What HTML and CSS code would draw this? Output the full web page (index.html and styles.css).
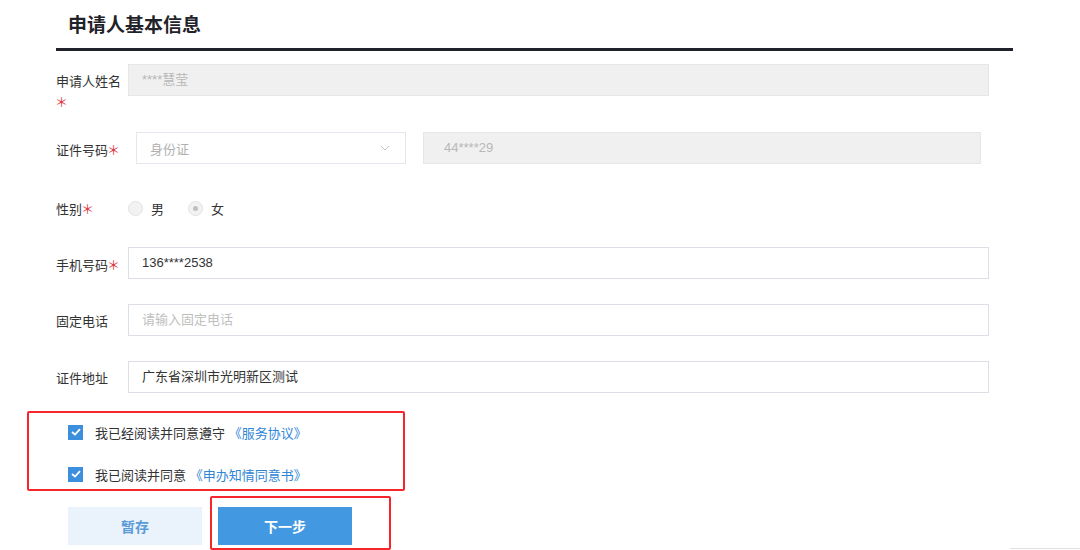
FILE: index.html
```html
<!DOCTYPE html>
<html lang="zh-CN">
<head>
  <meta charset="UTF-8">
  <title>申请人基本信息</title>
  <link rel="stylesheet" href="styles.css">
</head>
<body>

  <div class="page">
    <!-- 标题 -->
    <h2 class="title">申请人基本信息</h2>

    <!-- 表单 -->
    <div class="form">
      <div class="row row--tall">
        <label class="label">申请人姓名<span class="star">＊</span></label>
        <div class="control">
          <div class="input input--disabled">****慧莹</div>
        </div>
      </div>

      <div class="row">
        <label class="label">证件号码<span class="star">＊</span></label>
        <div class="control control--split">
          <div class="select">
            <span>身份证</span>
            <svg class="arrow" width="10" height="6" viewBox="0 0 10 6"><path d="M1 1 L5 5 L9 1" fill="none" stroke="#c0c4cc" stroke-width="1"/></svg>
          </div>
          <div class="input input--disabled input--num">44****29</div>
        </div>
      </div>

      <div class="row row--radio">
        <label class="label">性别<span class="star">＊</span></label>
        <div class="control control--radios">
          <span class="radio"></span><span class="radio-text">男</span>
          <span class="radio radio--on"></span><span class="radio-text">女</span>
        </div>
      </div>

      <div class="row">
        <label class="label">手机号码<span class="star">＊</span></label>
        <div class="control">
          <div class="input">136****2538</div>
        </div>
      </div>

      <div class="row">
        <label class="label">固定电话</label>
        <div class="control">
          <div class="input input--placeholder">请输入固定电话</div>
        </div>
      </div>

      <div class="row">
        <label class="label">证件地址</label>
        <div class="control">
          <div class="input">广东省深圳市光明新区测试</div>
        </div>
      </div>
    </div>

    <!-- 协议 -->
    <div class="agree">
      <div class="check-row">
        <span class="checkbox"><svg width="10" height="8" viewBox="0 0 10 8"><path d="M1 4 L4 6.5 L9 1.2" fill="none" stroke="#fff" stroke-width="1.8"/></svg></span>
        <span>我已经阅读并同意遵守 <a class="link">《服务协议》</a></span>
      </div>
      <div class="check-row">
        <span class="checkbox"><svg width="10" height="8" viewBox="0 0 10 8"><path d="M1 4 L4 6.5 L9 1.2" fill="none" stroke="#fff" stroke-width="1.8"/></svg></span>
        <span>我已阅读并同意 <a class="link">《申办知情同意书》</a></span>
      </div>
    </div>

    <!-- 按钮 -->
    <div class="buttons">
      <button class="btn btn--light">暂存</button>
      <div class="btn-mark">
        <button class="btn btn--primary">下一步</button>
      </div>
    </div>
  </div>

  <div class="corner-line"></div>

</body>
</html>
```

FILE: styles.css
```css
html, body {
  margin: 0;
  padding: 0;
  background: #fff;
  font-family: "Liberation Sans", "Noto Sans CJK SC", sans-serif;
  color: #333;
  font-size: 13px;
}

.page {
  width: 957px;
  margin-left: 56px;
}

.title {
  margin: 0;
  padding: 13px 0 0 12px;
  height: 35px;
  font-size: 19px;
  line-height: 26px;
  font-weight: bold;
  color: #1f2329;
  border-bottom: 3px solid #1f2329;
}

.form {
  padding-top: 13px;
  width: 933px;
}

.row {
  display: flex;
  align-items: flex-start;
  margin-bottom: 25px;
}

.row:last-child {
  margin-bottom: 0;
}

.row--tall {
  margin-bottom: 19px;
}

.row--radio {
  height: 40px;
  margin-bottom: 18px;
}

.label {
  width: 72px;
  flex-shrink: 0;
  padding-top: 8px;
  line-height: 20px;
  color: #333;
}

.row--radio .label {
  padding-top: 10px;
}

.star {
  font-family: "Noto Sans CJK SC", sans-serif;
  color: #d9363e;
  margin-left: -1px;
}

.control {
  flex: 1;
}

.control--split {
  display: flex;
  gap: 17px;
  padding: 0 8px;
}

.input {
  box-sizing: border-box;
  height: 32px;
  line-height: 30px;
  border: 1px solid #dcdfe6;
  padding: 0 13px;
  color: #333;
  background: #fff;
}

.input--disabled {
  background: #f0f0f0;
  border-color: #e6e6e6;
  color: #b8b8b8;
}

.input--num {
  flex: 1;
  padding-left: 20px;
}

.input--placeholder {
  color: #c0c0c0;
}

.select {
  box-sizing: border-box;
  width: 270px;
  height: 32px;
  border: 1px solid #e4e7ed;
  display: flex;
  align-items: center;
  justify-content: space-between;
  padding: 0 15px 0 13px;
  color: #b0b0b0;
}

.control--radios {
  display: flex;
  align-items: center;
  height: 32px;
  padding-top: 3px;
}

.radio {
  box-sizing: border-box;
  width: 15px;
  height: 15px;
  border-radius: 50%;
  border: 1px solid #e2e2e2;
  background: #f2f2f2;
  position: relative;
}

.radio--on::after {
  content: "";
  position: absolute;
  left: 4px;
  top: 4px;
  width: 5px;
  height: 5px;
  border-radius: 50%;
  background: #c0c0c0;
}

.radio-text {
  margin: 0 24px 0 8px;
  color: #333;
}

/* 协议勾选 */
.agree {
  box-sizing: border-box;
  width: 378px;
  height: 80px;
  margin: 18px 0 0 -29px;
  border: 2px solid #f5262c;
  border-radius: 2px;
  padding: 9px 0 0 39px;
}

.check-row {
  display: flex;
  align-items: center;
  height: 20px;
  margin-bottom: 22px;
  color: #333;
}

.checkbox {
  width: 15px;
  height: 15px;
  background: #3c8fdd;
  display: flex;
  align-items: center;
  justify-content: center;
  margin-right: 12px;
}

.link {
  color: #2f86d6;
}

/* 按钮 */
.buttons {
  display: flex;
  align-items: flex-start;
  margin: 5px 0 0 12px;
}

.btn {
  width: 134px;
  height: 38px;
  border: none;
  font-family: inherit;
  font-size: 14px;
  font-weight: bold;
  cursor: pointer;
}

.btn--light {
  background: #eaf3fb;
  color: #5b9bd8;
  margin-top: 11px;
}

.btn-mark {
  box-sizing: border-box;
  margin-left: 8px;
  width: 181px;
  height: 54px;
  border: 2px solid #f5262c;
  border-radius: 2px;
  padding: 9px 0 0 6px;
}

.btn--primary {
  background: #4299e1;
  color: #fff;
}

.corner-line {
  position: absolute;
  right: 0;
  top: 548px;
  width: 70px;
  height: 1px;
  background: #e0e0e0;
}
```
